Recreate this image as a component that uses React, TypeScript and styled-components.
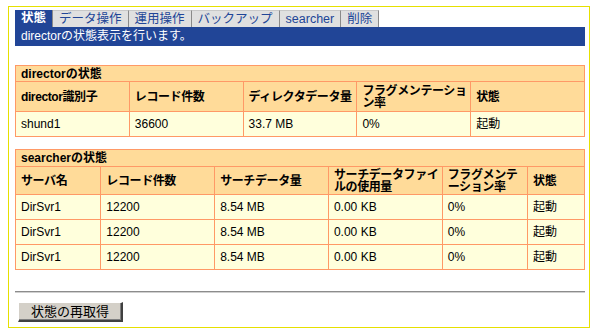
import React from "react";
import styled, { createGlobalStyle } from "styled-components";

const GlobalStyle = createGlobalStyle`
  body {
    margin: 0;
    background: #ffffff;
    font-family: "Liberation Sans", "Noto Sans CJK JP", sans-serif;
    font-size: 12px;
    color: #000;
  }
`;

const Frame = styled.div`
  margin: 6px 0 0 8px;
  width: 582px;
  height: 322px;
  box-sizing: border-box;
  border: 1px solid #e6e000;
  padding: 3px 4px 0 6px;
  display: flex;
  flex-direction: column;
  align-items: flex-start;
`;

const TabBar = styled.div`
  display: flex;
  height: 17px;
`;

const Tab = styled.div<{ $active?: boolean }>`
  display: flex;
  align-items: center;
  padding: 0 6px;
  font-size: 12.5px;
  line-height: 17px;
  background: ${(p) => (p.$active ? "#214597" : "#e0e0e0")};
  color: ${(p) => (p.$active ? "#ffffff" : "#214597")};
  font-weight: ${(p) => (p.$active ? "bold" : "normal")};
  border-right: 1px solid #8a8a8a;
  border-top: ${(p) => (p.$active ? "none" : "1px solid #c8c8c8")};
  box-sizing: border-box;
`;

const InfoBar = styled.div`
  align-self: stretch;
  height: 19px;
  line-height: 19px;
  background: #214597;
  color: #ffffff;
  font-size: 12px;
  padding-left: 6px;
`;

const Table = styled.table<{ $top: number }>`
  width: 570px;
  border-collapse: collapse;
  table-layout: fixed;
  border: 1px solid #ff9966;
  margin-top: ${(p) => p.$top}px;
`;

const Caption = styled.th<{ $h: number }>`
  background: #ffdb99;
  text-align: left;
  font-weight: bold;
  height: ${(p) => p.$h}px;
  padding: 0 5px;
  border: 1px solid #ff9966;
  line-height: 14px;
`;

const Head = styled.th<{ $h: number }>`
  background: #ffdb99;
  text-align: left;
  font-weight: bold;
  font-size: 12px;
  letter-spacing: -0.4px;
  height: ${(p) => p.$h}px;
  padding: 0 1px 0 5px;
  border: 1px solid #ff9966;
  line-height: 12px;
  word-break: break-all;
`;

const Cell = styled.td`
  background: #ffffdc;
  height: 24px;
  padding: 0 5px;
  border: 1px solid #ff9966;
  line-height: 14px;
`;

const Rule = styled.div`
  margin-top: 21px;
  width: 570px;
  border-top: 1px solid #8c8c8c;
  border-bottom: 1px solid #d0d0d0;
`;

const Button = styled.button`
  display: block;
  margin: 9px 0 0 3px;
  width: 105px;
  height: 20px;
  padding: 0;
  background: #d4d0c8;
  font-family: "Liberation Sans", "Noto Sans CJK JP", sans-serif;
  font-size: 13px;
  line-height: 16px;
  color: #000;
  border-style: solid;
  border-width: 1px 2px 2px 1px;
  border-color: #ffffff #404040 #404040 #ffffff;
  box-shadow: inset -1px -1px 0 #808080;
`;

const tabs = ["状態", "データ操作", "運用操作", "バックアップ", "searcher", "削除"];

const dirCols = ["director識別子", "レコード件数", "ディレクタデータ量", "フラグメンテーション率", "状態"];
const dirRows = [["shund1", "36600", "33.7 MB", "0%", "起動"]];

const srcCols = [
  { label: "サーバ名", w: 15 },
  { label: "レコード件数", w: 20 },
  { label: "サーチデータ量", w: 20 },
  { label: "サーチデータファイルの使用量", w: 20 },
  { label: "フラグメンテーション率", w: 15 },
  { label: "状態", w: 10 },
];
const srcRows = [0, 1, 2].map(() => ["DirSvr1", "12200", "8.54  MB", "0.00 KB", "0%", "起動"]);

export default function App() {
  return (
    <>
      <GlobalStyle />
      <Frame>
        <TabBar>
          {tabs.map((t, i) => (
            <Tab key={t} $active={i === 0}>
              {t}
            </Tab>
          ))}
        </TabBar>
        <InfoBar>directorの状態表示を行います。</InfoBar>

        <Table $top={19}>
          <colgroup>
            {dirCols.map((c) => (
              <col key={c} style={{ width: "20%" }} />
            ))}
          </colgroup>
          <thead>
            <tr>
              <Caption colSpan={5} $h={15}>
                directorの状態
              </Caption>
            </tr>
            <tr>
              {dirCols.map((c) => (
                <Head key={c} $h={29}>
                  {c}
                </Head>
              ))}
            </tr>
          </thead>
          <tbody>
            {dirRows.map((r, i) => (
              <tr key={i}>
                {r.map((v, j) => (
                  <Cell key={j}>{v}</Cell>
                ))}
              </tr>
            ))}
          </tbody>
        </Table>

        <Table $top={12}>
          <colgroup>
            {srcCols.map((c) => (
              <col key={c.label} style={{ width: `${c.w}%` }} />
            ))}
          </colgroup>
          <thead>
            <tr>
              <Caption colSpan={6} $h={16}>
                searcherの状態
              </Caption>
            </tr>
            <tr>
              {srcCols.map((c) => (
                <Head key={c.label} $h={27}>
                  {c.label}
                </Head>
              ))}
            </tr>
          </thead>
          <tbody>
            {srcRows.map((r, i) => (
              <tr key={i}>
                {r.map((v, j) => (
                  <Cell key={j}>{v}</Cell>
                ))}
              </tr>
            ))}
          </tbody>
        </Table>

        <Rule />
        <Button>状態の再取得</Button>
      </Frame>
    </>
  );
}
